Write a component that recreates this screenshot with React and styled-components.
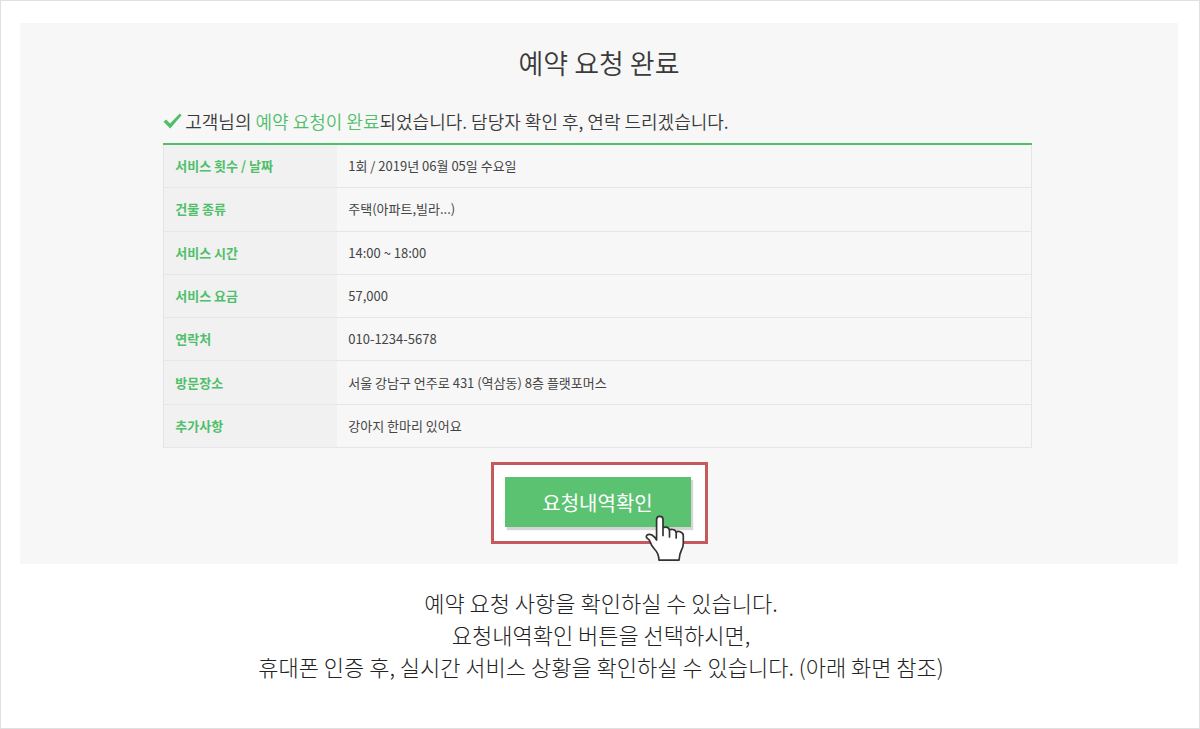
import React from 'react';
import styled, { createGlobalStyle } from 'styled-components';

const colors = {
  green: '#4fbf6a',
  button: '#5bc272',
  text: '#3a3a3a',
  caption: '#222',
  value: '#444',
  panel: '#f7f7f7',
  label: '#f1f1f1',
  line: '#e6e6e6',
  frame: '#c55a5e',
};

const GlobalStyle = createGlobalStyle`
  * {
    box-sizing: border-box;
  }
  body {
    margin: 0;
    background-color: #fff;
    color: ${colors.text};
    font-family: 'Noto Sans CJK KR', 'Noto Sans', sans-serif;
  }
  h1, p {
    margin: 0;
  }
`;

const Page = styled.main`
  min-height: 100vh;
  padding: 22px 21px 40px 19px;
  border: 1px solid #e0e0e0;
`;

const Panel = styled.section`
  display: flex;
  flex-direction: column;
  align-items: center;
  padding: 20px 0;
  background-color: ${colors.panel};
`;

const Title = styled.h1`
  font-size: 27px;
  font-weight: 350;
  line-height: 40px;
`;

const Content = styled.div`
  width: 75%;
  margin-right: 3px;
`;

const Message = styled.p`
  display: flex;
  align-items: center;
  gap: 3px;
  margin-top: 23px;
  padding-bottom: 7px;
  font-size: 18px;
  font-weight: 350;
  line-height: 30px;
`;

const Highlight = styled.span`
  color: ${colors.green};
`;

const Table = styled.table`
  width: 100%;
  height: 305px;
  border: 1px solid ${colors.line};
  border-top: 2px solid ${colors.green};
  border-collapse: collapse;
  font-size: 13px;
  line-height: 20px;
  text-align: left;

  tr + tr {
    border-top: 1px solid ${colors.line};
  }
`;

const Label = styled.th`
  width: 20%;
  padding: 11px;
  background-color: ${colors.label};
  color: ${colors.green};
  font-weight: 700;
`;

const Value = styled.td`
  padding: 11px;
  color: ${colors.value};
`;

const ButtonFrame = styled.div`
  position: relative;
  margin-top: 14px;
  padding: 12px 14px 14px 11px;
  border: 3px solid ${colors.frame};
  background-color: #fff;
`;

const Button = styled.button`
  display: block;
  width: 186px;
  height: 50px;
  padding: 0;
  border: 0;
  background-color: ${colors.button};
  box-shadow: 2px 3px 1px #d5d5d5;
  color: #fff;
  font-family: inherit;
  font-size: 20px;
  font-weight: 400;
  cursor: pointer;
`;

const Pointer = styled.svg`
  position: absolute;
  right: 19px;
  bottom: -21px;
  width: 44px;
  height: 48px;
  pointer-events: none;
`;

const Caption = styled.p`
  margin-top: 22px;
  padding-left: 4px;
  color: ${colors.caption};
  font-size: 22px;
  font-weight: 300;
  line-height: 32px;
  text-align: center;
`;

const rows = [
  { label: '서비스 횟수 / 날짜', value: '1회 / 2019년 06월 05일 수요일' },
  { label: '건물 종류', value: '주택(아파트,빌라...)' },
  { label: '서비스 시간', value: '14:00 ~ 18:00' },
  { label: '서비스 요금', value: '57,000' },
  { label: '연락처', value: '010-1234-5678' },
  { label: '방문장소', value: '서울 강남구 언주로 431 (역삼동) 8층 플랫포머스' },
  { label: '추가사항', value: '강아지 한마리 있어요' },
];

const CheckIcon = () => (
  <svg width="19" height="18" viewBox="0 0 19 18" aria-hidden="true">
    <path d="M0.500 9.800 L3.200 7.500 L7 11.600 L16.800 1.500 L18.600 3.200 L7.200 16.500 Z" fill={colors.green} />
  </svg>
);

const HandIcon = () => (
  <Pointer viewBox="0 0 44 48" aria-hidden="true">
    <path
      d="M14.600 26 V5.500 Q14.600 2.300 17.800 2.300 Q21 2.300 21 5.500 V21.500 V13.800 Q22.500 12.800 24.500 13.200 Q27.500 13.800 27.500 17 V23 V16 Q29 15 31 15.500 Q34.200 16.200 34.200 19 V24 V18 Q36 17 38 17.700 Q41.300 18.800 41.300 21.500 V29 Q41.300 33 39.500 36 Q37.500 40 37 46.200 H17 Q16.800 39.500 12.800 35.500 Q9.300 32 8.300 28.300 Q7.600 25.500 5.500 24.500 Q3.500 23 4.800 21.300 Q6.800 19.500 10 21 Q13 23 14.600 26 Z"
      fill="#fff"
      stroke="#333"
      strokeWidth="1.7"
      strokeLinejoin="round"
    />
  </Pointer>
);

export default function App() {
  return (
    <>
      <GlobalStyle />
      <Page>
        <Panel>
          <Title>예약 요청 완료</Title>
          <Content>
            <Message>
              <CheckIcon />
              <span>
                고객님의 <Highlight>예약 요청이 완료</Highlight>되었습니다. 담당자 확인 후, 연락 드리겠습니다.
              </span>
            </Message>
            <Table>
              <tbody>
                {rows.map(row => (
                  <tr key={row.label}>
                    <Label scope="row">{row.label}</Label>
                    <Value>{row.value}</Value>
                  </tr>
                ))}
              </tbody>
            </Table>
          </Content>
          <ButtonFrame>
            <Button type="button">요청내역확인</Button>
            <HandIcon />
          </ButtonFrame>
        </Panel>
        <Caption>
          예약 요청 사항을 확인하실 수 있습니다.<br />
          요청내역확인 버튼을 선택하시면,<br />
          휴대폰 인증 후, 실시간 서비스 상황을 확인하실 수 있습니다. (아래 화면 참조)
        </Caption>
      </Page>
    </>
  );
}
